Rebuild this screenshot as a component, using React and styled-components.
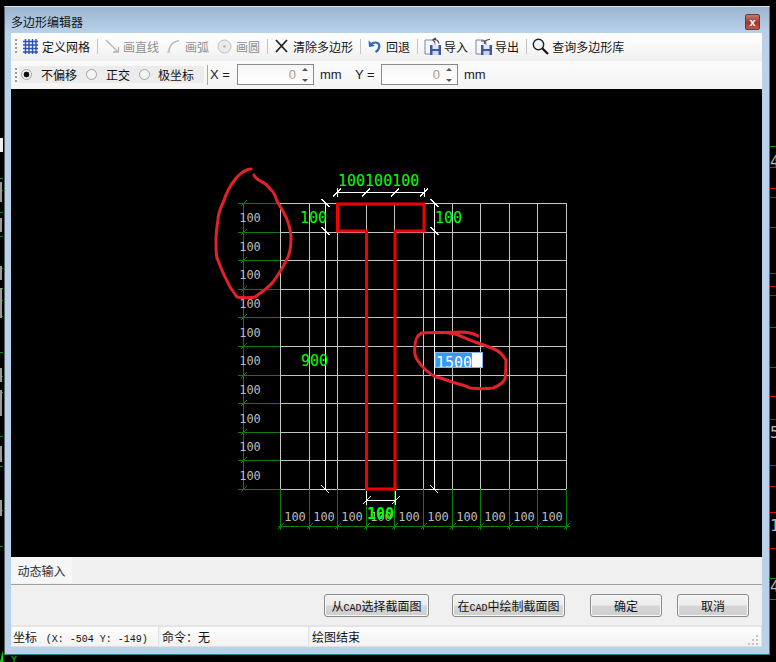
import React from "react";
import styled, { createGlobalStyle } from "styled-components";

const GlobalStyle = createGlobalStyle`
  html, body {
    margin: 0;
    padding: 0;
    background: #000;
    height: 662px;
    overflow: hidden;
  }
  body {
    font-family: "Noto Sans CJK SC", "Liberation Sans", sans-serif;
    font-size: 12px;
    color: #111;
  }
`;

const Desktop = styled.div`
  position: relative;
  width: 776px;
  height: 662px;
  padding: 6px 6px 0 4px;
  box-sizing: border-box;
  background: #000;
`;

const Behind = styled.svg`
  position: absolute;
  left: 0;
  top: 0;
`;

const Win = styled.div`
  position: relative;
  width: 766px;
  height: 649px;
  box-sizing: border-box;
  display: flex;
  flex-direction: column;
  padding: 0 7px 7px 6px;
  border: 1px solid #2f7f93;
  border-top-color: #d8e2ea;
  border-left-color: #59636b;
  background: #b9d2ea;
`;

const TitleBar = styled.div`
  height: 26px;
  margin: 0 -7px 0 -6px;
  padding: 0 9px 0 6px;
  display: flex;
  align-items: center;
  justify-content: space-between;
  background: linear-gradient(#9cb6d0, #b8d2ea);
`;

const TitleText = styled.span`
  font-size: 12px;
  color: #141414;
  padding-top: 3px;
`;

const CloseBtn = styled.div`
  width: 13px;
  height: 14px;
  margin-top: 4px;
  border: 1px solid #6b3a38;
  border-radius: 2px;
  background: linear-gradient(#c77a6f, #a5352c 55%, #b85c50);
  display: flex;
  align-items: center;
  justify-content: center;
  color: #fff;
  font: bold 11px "Liberation Sans", sans-serif;
  line-height: 1;
`;

const Toolbar = styled.div`
  height: 28px;
  flex: none;
  display: flex;
  align-items: center;
  box-sizing: border-box;
  padding: 0 0 2px 4px;
  background: linear-gradient(#ffffff, #f7f7f7 60%, #eeeeee);
`;

const Grip = styled.div`
  width: 2px;
  height: 14px;
  margin-right: 2px;
  background: repeating-linear-gradient(#9a9a9a 0 2px, transparent 2px 4px);
`;

const ToolBtn = styled.div`
  display: flex;
  align-items: center;
  gap: ${(p) => p.$gap}px;
  margin: 0 4px 0 ${(p) => p.$ml ?? 4}px;
  color: ${(p) => (p.$off ? "#8f8f8f" : "#141414")};
  white-space: nowrap;
`;

const Sep = styled.div`
  width: 1px;
  height: 15px;
  margin: 0 3px;
  background: #c4c4c4;
`;

const OptionBar = styled(Toolbar)`
  padding-bottom: 1px;
  background: linear-gradient(#fbfbfb, #f4f4f4);
`;

const RadioGroup = styled.div`
  display: flex;
  align-items: center;
  gap: 9px;
  height: 17px;
  width: 185px;
  box-sizing: border-box;
  padding-left: 2px;
  background: #ececec;
`;

const RadioItem = styled.div`
  display: flex;
  align-items: center;
  gap: ${(p) => p.$gap || 9}px;
`;

const Radio = styled.span`
  width: 9px;
  height: 9px;
  border: 1px solid #a3a3a3;
  border-radius: 50%;
  background: ${(p) =>
    p.$on
      ? "radial-gradient(circle, #111 0 2.6px, #f4f4f4 3.2px)"
      : "#f4f4f4"};
`;

const OptionSep = styled.div`
  width: 1px;
  height: 20px;
  margin: 0 2px 0 3px;
  background: #a8a8a8;
`;

const Latin = styled.span`
  font: 13px "Liberation Sans", sans-serif;
  width: ${(p) => p.$w}px;
  padding-left: ${(p) => p.$pl || 0}px;
  box-sizing: border-box;
  flex: none;
  color: #1a1a2a;
`;

const NumberBox = styled.div`
  width: 77px;
  height: 21px;
  box-sizing: border-box;
  border: 1px solid #8a8a8a;
  background: linear-gradient(#f6f6f6, #fff);
  display: flex;
  align-items: center;
  justify-content: flex-end;
  font: 13px "Liberation Sans", sans-serif;
  color: #b09a7c;
`;

const Spin = styled.div`
  width: 17px;
  height: 100%;
  display: flex;
  flex-direction: column;
  align-items: center;
  justify-content: space-between;
  padding: 3px 0 2px;
  box-sizing: border-box;
`;

const SpinArrow = styled.span`
  width: 0;
  height: 0;
  border-left: 3px solid transparent;
  border-right: 3px solid transparent;
  ${(p) => (p.$down ? "border-top: 3px solid #555;" : "border-bottom: 3px solid #555;")}
`;

const Canvas = styled.div`
  position: relative;
  flex: none;
  width: 751px;
  height: 468px;
  background: #000;
`;

const Drawing = styled.svg`
  display: block;
`;

const EditBox = styled.div`
  position: absolute;
  left: 424px;
  top: 263px;
  width: 48px;
  height: 16px;
  box-sizing: border-box;
  border: 1px solid #8db4dc;
  background: #fff;
  overflow: hidden;
  font: 15px/21px "DejaVu Sans Mono", monospace;
`;

const Selected = styled.span`
  display: block;
  width: 36px;
  height: 100%;
  background: #3399ff;
  color: #fff;
`;

const TabStrip = styled.div`
  height: 27px;
  flex: none;
  background: #f0f0f0;
  border-bottom: 1px solid #a0a0a0;
  box-sizing: content-box;
`;

const Tab = styled.div`
  width: 61px;
  height: 26px;
  display: flex;
  align-items: center;
  justify-content: center;
  background: #f6f6f6;
  color: #24303a;
`;

const ActionRow = styled.div`
  height: 42px;
  flex: none;
  box-sizing: border-box;
  display: flex;
  align-items: flex-start;
  padding-top: 9px;
  background: #f0f0f0;
  border-bottom: 2px solid #e4e4e4;
`;

const Button = styled.div`
  width: ${(p) => p.$w}px;
  margin-left: ${(p) => p.$ml}px;
  height: 23px;
  box-sizing: border-box;
  flex: none;
  display: flex;
  align-items: center;
  justify-content: center;
  border: 1px solid #8a8a8a;
  border-radius: 3px;
  background: linear-gradient(#f3f3f3, #ececec 48%, #d6d6d6 52%, #cfcfcf);
  box-shadow: inset 0 0 0 1px #f8f8f8;
  color: #111;
  white-space: nowrap;
`;

const Narrow = styled.span`
  font: 10px "Liberation Mono", monospace;
`;

const StatusBar = styled.div`
  height: 20px;
  flex: none;
  display: flex;
  gap: 2px;
  padding-left: 1px;
  background: #f0f0f0;
`;

const Pane = styled.div`
  width: ${(p) => p.$w}px;
  flex: ${(p) => (p.$w ? "none" : "1")};
  position: relative;
  box-sizing: border-box;
  padding-left: 1px;
  display: flex;
  align-items: center;
  white-space: pre;
  background: linear-gradient(#fdfdfd, #f2f2f2);
  border-bottom: 1px solid #dedede;
  border-right: 1px solid #e2e2e2;
`;

const Mono = styled.span`
  font: 10px "Liberation Mono", monospace;
`;

const Resize = styled.svg`
  position: absolute;
  right: 2px;
  bottom: 1px;
`;

const TOOL_ICON = { width: 15, height: 15, viewBox: "0 0 15 15" };

const GridIcon = () => (
  <svg {...TOOL_ICON}>
    <path
      d="M2.5 0v15M6 0v15M9.5 0v15M13 0v15M0 2.5h15M0 6h15M0 9.5h15M0 13h15"
      stroke="#2a52b8"
      strokeWidth="1.4"
      fill="none"
    />
  </svg>
);

const LineIcon = () => (
  <svg {...TOOL_ICON}>
    <path d="M1 1l12 12M8 13h5.5V8" stroke="#b4b4b4" strokeWidth="1.3" fill="none" />
  </svg>
);

const ArcIcon = () => (
  <svg width="13" height="15" viewBox="0 0 13 15">
    <path d="M1.5 14C2 7 6 2.5 12 1.5" stroke="#b8b8b8" strokeWidth="1.4" fill="none" />
    <circle cx="1.5" cy="13" r="1.2" fill="#ccc" />
  </svg>
);

const CircleIcon = () => (
  <svg {...TOOL_ICON}>
    <circle cx="7.5" cy="7.5" r="6.5" fill="#eaeaea" stroke="#c2c2c2" />
    <circle cx="7.5" cy="7.5" r="1.2" fill="#b0b0b0" />
  </svg>
);

const CrossIcon = () => (
  <svg width="13" height="14" viewBox="0 0 13 14">
    <path d="M1 1l11 12M12 1L1 13" stroke="#222" strokeWidth="1.8" fill="none" />
  </svg>
);

const UndoIcon = () => (
  <svg width="13" height="14" viewBox="0 0 13 14">
    <path d="M3 6C5 2.500 11 2.500 11.300 7c.1 2.500-1.500 4.500-3.800 6" stroke="#2a66c4" strokeWidth="2.200" fill="none" />
    <path d="M0.500 1.500l0.500 6.500 6-1z" fill="#2a66c4" />
  </svg>
);

const DiskIcon = ({ flip }) => (
  <svg width="17" height="18" viewBox="0 0 17 18">
    <path d="M1 3h7l3 2v12H1z" fill="#f6f7fb" stroke="#7c86a8" />
    <rect x="6" y="8" width="11" height="10" fill="#3f57a6" />
    <rect x="8.500" y="8" width="6" height="4" fill="#dfe6f5" />
    <rect x="8.500" y="14" width="6" height="4" fill="#cfd6e8" />
    <path
      d={flip ? "M9 6.500c1-3 3-4 6-4M6 4h4v3" : "M15 6.500c-.5-3-3-4.500-6-4M12 1l-3 1.500 2 3"}
      stroke="#444"
      strokeWidth="1.100"
      fill="none"
    />
  </svg>
);

const LensIcon = () => (
  <svg width="17" height="17" viewBox="0 0 17 17">
    <circle cx="6.500" cy="6.500" r="5.200" fill="#eef6fb" stroke="#222" strokeWidth="1.400" />
    <path d="M10.500 10.500l5.500 5.500" stroke="#111" strokeWidth="2.200" />
  </svg>
);

const gridX = Array.from({ length: 11 }, (_, i) => 280.5 + Math.round(i * 28.6));
const gridY = Array.from({ length: 11 }, (_, i) => 203.5 + Math.round(i * 28.6));
const rowLabels = [217, 246, 274, 303, 332, 360, 389, 418, 446, 475];
const colLabels = [295, 324, 352, 381, 409, 438, 467, 495, 524, 552];

const slash = (x, y, t = 4) => `M${x - t} ${y + t}L${x + t} ${y - t}`;
const backslash = (x, y, t = 4) => `M${x - t} ${y - t}L${x + t} ${y + t}`;

const greenPath = [
  "M243.500 203V489",
  "M238 489.500H280",
  ...gridY.map((y) => `M238 ${y}H280`),
  ...gridY.map((y) => slash(243.5, y, 3)),
  "M278 526.500H570",
  ...gridX.map((x) => `M${x} 489V530`),
  ...gridX.map((x) => slash(x, 526.5, 3)),
].join("");

const whitePath = [
  "M337 192.500H424",
  ...[337, 366, 395, 424].map((x) => slash(x, 192.5)),
  "M337.500 188V197M424.500 188V197",
  "M325.500 203V489M434.500 203V489",
  ...[203, 231].map((y) => backslash(325.5, y)),
  ...[203, 231].map((y) => backslash(434.5, y)),
  "M320 489.500H330M429 489.500H439",
  backslash(325.5, 489.5),
  backslash(434.5, 489.5),
  "M366.500 500.500H395.500M366.500 491V505M395.500 491V505",
  slash(366.5, 500.5),
  slash(395.5, 500.5),
].join("");

const leftLoop =
  "M251 169C246 169 241 173 237 177C231 184 226 193 223 203C220 209 218 214 218 220C217 226 216 232 216 240C216 248 216 254 217 258C220 265 222 271 225 277C228 284 233 292 237 297C243 298 250 298 255 297C262 292 268 288 273 282C278 275 284 266 288 257C291 250 291 244 291 238C291 230 289 224 286 217C283 211 280 206 277 201C275 195 273 191 271 190C268 186 265 183 262 182C258 180 255 178 254 175";

const rightLoop =
  "M478 336C473 333 467 332 460 332C447 333 433 332 422 333C417 335 415 341 415 346C414 352 415 357 418 361C422 367 428 373 436 377C442 378 447 380 452 382C458 384 464 385 470 388C478 389 486 389 493 388C498 386 503 383 505 379C506 372 506 366 506 360C503 355 499 351 494 349C487 346 481 344 475 342C469 340 463 337 458 335C454 334 451 333 448 333";

const frags = [
  [146, "#0a8a0a"], [167, "#0a8a0a"], [188, "#e01010"], [197, "#c01010"],
  [227, "#e01010"], [273, "#e01010"], [286, "#c01010"], [295, "#c01010"],
  [327, "#e01010"], [367, "#e01010"], [396, "#e01010"], [419, "#c01010"],
  [465, "#e01010"], [486, "#c01010"], [512, "#e01010"], [548, "#c01010"],
  [578, "#0a8a0a"], [599, "#0a8a0a"],
];

const leftFrags = [178, 190, 212, 236, 268, 288, 300, 316, 352, 376, 392, 436, 466, 510, 546];
const leftBars = [[182, 20], [218, 14], [266, 14], [288, 30], [368, 14], [390, 26], [446, 16], [500, 16]];

const Spinner = () => (
  <Spin>
    <SpinArrow />
    <SpinArrow $down />
  </Spin>
);

const App = () => {
  return (
    <Desktop>
      <GlobalStyle />
      <Behind width="776" height="662" viewBox="0 0 776 662">
        {frags.map(([y, c]) => (
          <rect key={y} x="770" y={y} width="6" height="1" fill={c} />
        ))}
        <g fill="#b8b8b8" fontFamily="DejaVu Sans Mono, monospace" fontSize="16">
          <text x="770" y="167">4</text>
          <text x="770" y="438">5</text>
          <text x="770" y="531">1</text>
          <text x="770" y="592">4</text>
        </g>
        <rect x="0" y="138" width="3" height="14" fill="#eee" />
        {leftFrags.map((y) => (
          <rect key={y} x="0" y={y} width="3" height="1" fill="#0a8a0a" />
        ))}
        {leftBars.map(([y, h]) => (
          <rect key={y} x="0" y={y} width="2" height={h} fill="#9a9a9a" />
        ))}
        <path d="M0 662L3 650V662Z" fill="#00e000" />
        <text x="11" y="662" fontSize="9" fill="#00e000" fontFamily="Liberation Sans, sans-serif">Y</text>
      </Behind>

      <Win>
        <TitleBar>
          <TitleText>多边形编辑器</TitleText>
          <CloseBtn>x</CloseBtn>
        </TitleBar>

        <Toolbar>
          <Grip />
          <ToolBtn $gap={4}>
            <GridIcon />
            定义网格
          </ToolBtn>
          <Sep />
          <ToolBtn $off $gap={3}>
            <LineIcon />
            画直线
          </ToolBtn>
          <ToolBtn $off $gap={5}>
            <ArcIcon />
            画弧
          </ToolBtn>
          <ToolBtn $off $gap={4}>
            <CircleIcon />
            画圆
          </ToolBtn>
          <Sep />
          <ToolBtn $gap={5}>
            <CrossIcon />
            清除多边形
          </ToolBtn>
          <Sep />
          <ToolBtn $gap={5}>
            <UndoIcon />
            回退
          </ToolBtn>
          <Sep />
          <ToolBtn $gap={3} $ml={3}>
            <DiskIcon />
            导入
          </ToolBtn>
          <ToolBtn $gap={3} $ml={3}>
            <DiskIcon flip />
            导出
          </ToolBtn>
          <Sep />
          <ToolBtn $gap={3} $ml={2}>
            <LensIcon />
            查询多边形库
          </ToolBtn>
        </Toolbar>

        <OptionBar>
          <Grip />
          <RadioGroup>
            <RadioItem>
              <Radio $on />
              不偏移
            </RadioItem>
            <RadioItem>
              <Radio />
              正交
            </RadioItem>
            <RadioItem $gap={8}>
              <Radio />
              极坐标
            </RadioItem>
          </RadioGroup>
          <OptionSep />
          <Latin $w={27}>X =</Latin>
          <NumberBox>
            0
            <Spinner />
          </NumberBox>
          <Latin $w={41} $pl={6}>mm</Latin>
          <Latin $w={26}>Y =</Latin>
          <NumberBox>
            0
            <Spinner />
          </NumberBox>
          <Latin $w={35} $pl={6}>mm</Latin>
        </OptionBar>

        <Canvas>
          <Drawing width="751" height="468" viewBox="11 89 751 468">
            <g stroke="#c4c4c4" strokeWidth="1" shapeRendering="crispEdges">
              {gridX.map((x) => (
                <line key={x} x1={x} x2={x} y1="203" y2="490" />
              ))}
              {gridY.map((y) => (
                <line key={y} x1="280" x2="567" y1={y} y2={y} />
              ))}
            </g>
            <path d={greenPath} stroke="#0b7d0b" strokeWidth="1" fill="none" shapeRendering="crispEdges" />
            <path d={whitePath} stroke="#fff" strokeWidth="1" fill="none" shapeRendering="crispEdges" />
            <path
              d="M337.500 204H424V231H395V489H366.500V231H337.500Z"
              stroke="#f00000"
              strokeWidth="3"
              fill="none"
            />
            <g fill="#bdbdbd" fontFamily="DejaVu Sans Mono, monospace" fontSize="12">
              {rowLabels.map((y) => (
                <text key={y} x="250" y={y + 4.5} textAnchor="middle">100</text>
              ))}
              {colLabels.map((x) => (
                <text key={x} x={x} y="520.5" textAnchor="middle">100</text>
              ))}
            </g>
            <g fill="#00ff00" fontFamily="DejaVu Sans Mono, monospace" fontSize="15">
              <text x="338" y="185.500">100100100</text>
              <text x="300" y="223">100</text>
              <text x="435" y="223">100</text>
              <text x="301" y="366">900</text>
              <text x="367" y="519" fontWeight="bold">100</text>
            </g>
            <path d={leftLoop} stroke="#e2212b" strokeWidth="3" fill="none" strokeLinecap="round" />
            <path d={rightLoop} stroke="#e2212b" strokeWidth="3" fill="none" strokeLinecap="round" />
          </Drawing>
          <EditBox>
            <Selected>1500</Selected>
          </EditBox>
        </Canvas>

        <TabStrip>
          <Tab>动态输入</Tab>
        </TabStrip>

        <ActionRow>
          <Button $w={105} $ml={313}>
            <span>
              从<Narrow>CAD</Narrow>选择截面图
            </span>
          </Button>
          <Button $w={113} $ml={23}>
            <span>
              在<Narrow>CAD</Narrow>中绘制截面图
            </span>
          </Button>
          <Button $w={72} $ml={25}>确定</Button>
          <Button $w={72} $ml={15}>取消</Button>
        </ActionRow>

        <StatusBar>
          <Pane $w={147}>
            <span>
              坐标 <Mono> (X: -504 Y: -149)</Mono>
            </span>
          </Pane>
          <Pane $w={148}>命令：无</Pane>
          <Pane>
            绘图结束
            <Resize width="12" height="12" viewBox="0 0 12 12">
              <path d="M9 2h2v2H9zM5 6h2v2H5zM9 6h2v2H9zM1 10h2v2H1zM5 10h2v2H5zM9 10h2v2H9z" fill="#c4c4c4" />
            </Resize>
          </Pane>
        </StatusBar>
      </Win>
    </Desktop>
  );
};

export default App;
